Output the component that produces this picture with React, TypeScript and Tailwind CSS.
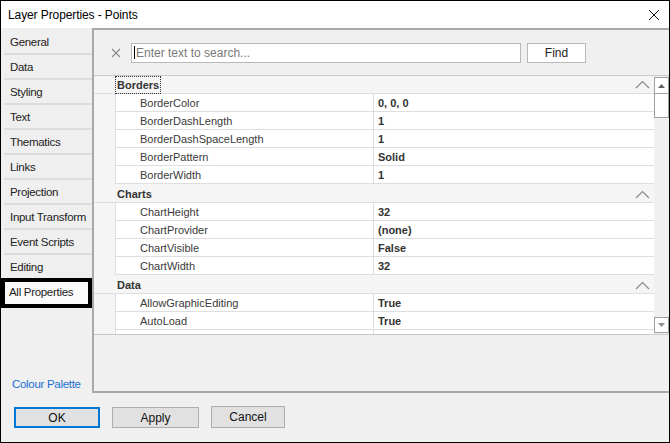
import React from "react";

const tabs = [
  "General",
  "Data",
  "Styling",
  "Text",
  "Thematics",
  "Links",
  "Projection",
  "Input Transform",
  "Event Scripts",
  "Editing",
];

const groups = [
  {
    name: "Borders",
    rows: [
      ["BorderColor", "0, 0, 0"],
      ["BorderDashLength", "1"],
      ["BorderDashSpaceLength", "1"],
      ["BorderPattern", "Solid"],
      ["BorderWidth", "1"],
    ],
  },
  {
    name: "Charts",
    rows: [
      ["ChartHeight", "32"],
      ["ChartProvider", "(none)"],
      ["ChartVisible", "False"],
      ["ChartWidth", "32"],
    ],
  },
  {
    name: "Data",
    rows: [
      ["AllowGraphicEditing", "True"],
      ["AutoLoad", "True"],
      ["", ""],
    ],
  },
];

function Chevron() {
  return (
    <svg width="15" height="9" viewBox="0 0 15 9" className="shrink-0">
      <polyline points="1,8 7.5,1.5 14,8" fill="none" stroke="#8a8a8a" strokeWidth="1.2" />
    </svg>
  );
}

export default function App() {
  return (
    <div className="w-[670px] h-[443px] border border-black bg-[#f0f0f0] flex flex-col font-['Liberation_Sans',Arial,sans-serif] text-[12px] text-black overflow-hidden">
      {/* title bar */}
      <div className="h-[27px] bg-white flex items-center justify-between pl-[7px] pr-[9px] shrink-0">
        <span className="tracking-[-0.1px]">Layer Properties - Points</span>
        <svg width="12" height="12" viewBox="0 0 12 12">
          <path d="M1 1 L11 11 M11 1 L1 11" stroke="#111" strokeWidth="1" />
        </svg>
      </div>

      <div className="flex h-[365px] shrink-0">
        {/* left nav */}
        <div className="w-[91px] flex flex-col pt-[2px] text-[11.5px]">
          {tabs.map((t) => (
            <div
              key={t}
              className="ml-[3px] h-[25px] border-b-2 border-[#dcdcdc] bg-[#efefef] flex items-center pl-[6px] pt-[2px] text-[#222] whitespace-nowrap tracking-[-0.3px]"
            >
              {t}
            </div>
          ))}
          <div className="-mt-[2px] h-[30px] border-4 border-black bg-[#fafafa] flex items-center pl-[4px] text-[#222] whitespace-nowrap tracking-[-0.3px]">
            All Properties
          </div>
          <div className="mt-auto pl-[11px] leading-[18px] text-[#1a6fd1] tracking-[-0.3px]">Colour Palette</div>
        </div>

        {/* right panel */}
        <div className="flex-1 border-t-2 border-l-2 border-b-2 border-[#a9a9a9] flex flex-col">
          <div className="h-[45px] flex items-center shrink-0">
            <svg width="10" height="10" viewBox="0 0 10 10" className="ml-[17px]">
              <path d="M1 1 L9 9 M9 1 L1 9" stroke="#8a8a8a" strokeWidth="1.1" />
            </svg>
            <div className="ml-[10px] w-[390px] h-[20px] bg-white border border-[#b9b9b9] flex items-center pl-[2px]">
              <span className="w-px h-[13px] bg-black mr-px" />
              <span className="text-[#7a7a7a]">Enter text to search...</span>
            </div>
            <div className="ml-[6px] w-[59px] h-[20px] bg-white border border-[#b9b9b9] flex items-center justify-center text-[#222]">
              Find
            </div>
          </div>

          {/* property grid */}
          <div className="h-[260px] flex border-t border-b border-[#c9c9c9] bg-white shrink-0 text-[11px] text-[#3a3a3a]">
            <div className="w-[560px] flex flex-col overflow-hidden">
              {groups.map((g, gi) => (
                <React.Fragment key={g.name}>
                  <div
                    className={
                      "shrink-0 bg-[#f5f5f5] flex items-center pl-[22px] pr-[4px] border-b border-[#dedede] " +
                      (gi === 0 ? "h-[18px]" : "h-[19px] pt-[2px]")
                    }
                  >
                    <span
                      className={
                        "font-bold text-[#333] px-px leading-[16px] " +
                        (gi === 0 ? "outline outline-1 outline-dotted outline-[#333]" : "")
                      }
                    >
                      {g.name}
                    </span>
                    <div className="flex-1" />
                    <Chevron />
                  </div>
                  {g.rows.map(([k, v], ri) => (
                    <div key={g.name + ri} className="h-[18px] shrink-0 flex">
                      <div className="w-[21px] bg-[#f5f5f5] shrink-0" />
                      <div className="w-[259px] border-l border-b border-r border-[#dedede] flex items-center pl-[24px] pt-[2px]">
                        {k}
                      </div>
                      <div className="flex-1 border-b border-[#dedede] flex items-center pl-[4px] pt-[2px] font-bold text-[#333]">
                        {v}
                      </div>
                    </div>
                  ))}
                </React.Fragment>
              ))}
            </div>
            {/* scrollbar */}
            <div className="flex-1 bg-[#f0f0f0] flex flex-col">
              <div className="h-[17px] mt-px bg-white border border-[#a0a0a0] flex items-center justify-center">
                <svg width="7" height="4" viewBox="0 0 7 4">
                  <polygon points="0,4 3.5,0 7,4" fill="#606060" />
                </svg>
              </div>
              <div className="h-[24px] bg-white border border-t-0 border-[#a0a0a0]" />
              <div className="flex-1" />
              <div className="h-[16px] mb-px bg-white border border-[#a0a0a0] flex items-center justify-center">
                <svg width="7" height="4" viewBox="0 0 7 4">
                  <polygon points="0,0 3.5,4 7,0" fill="#909090" />
                </svg>
              </div>
            </div>
          </div>
          <div className="flex-1" />
        </div>
      </div>

      {/* buttons */}
      <div className="flex items-start pt-[14px] pl-[13px] text-[#111]">
        <div className="w-[86px] h-[21px] bg-[#e1e1e1] border-2 border-[#0078d7] flex items-center justify-center">
          OK
        </div>
        <div className="ml-[12px] w-[87px] h-[21px] bg-[#e1e1e1] border border-[#adadad] flex items-center justify-center">
          Apply
        </div>
        <div className="ml-[12px] -mt-px w-[74px] h-[22px] bg-[#e1e1e1] border border-[#adadad] flex items-center justify-center">
          Cancel
        </div>
      </div>
    </div>
  );
}
